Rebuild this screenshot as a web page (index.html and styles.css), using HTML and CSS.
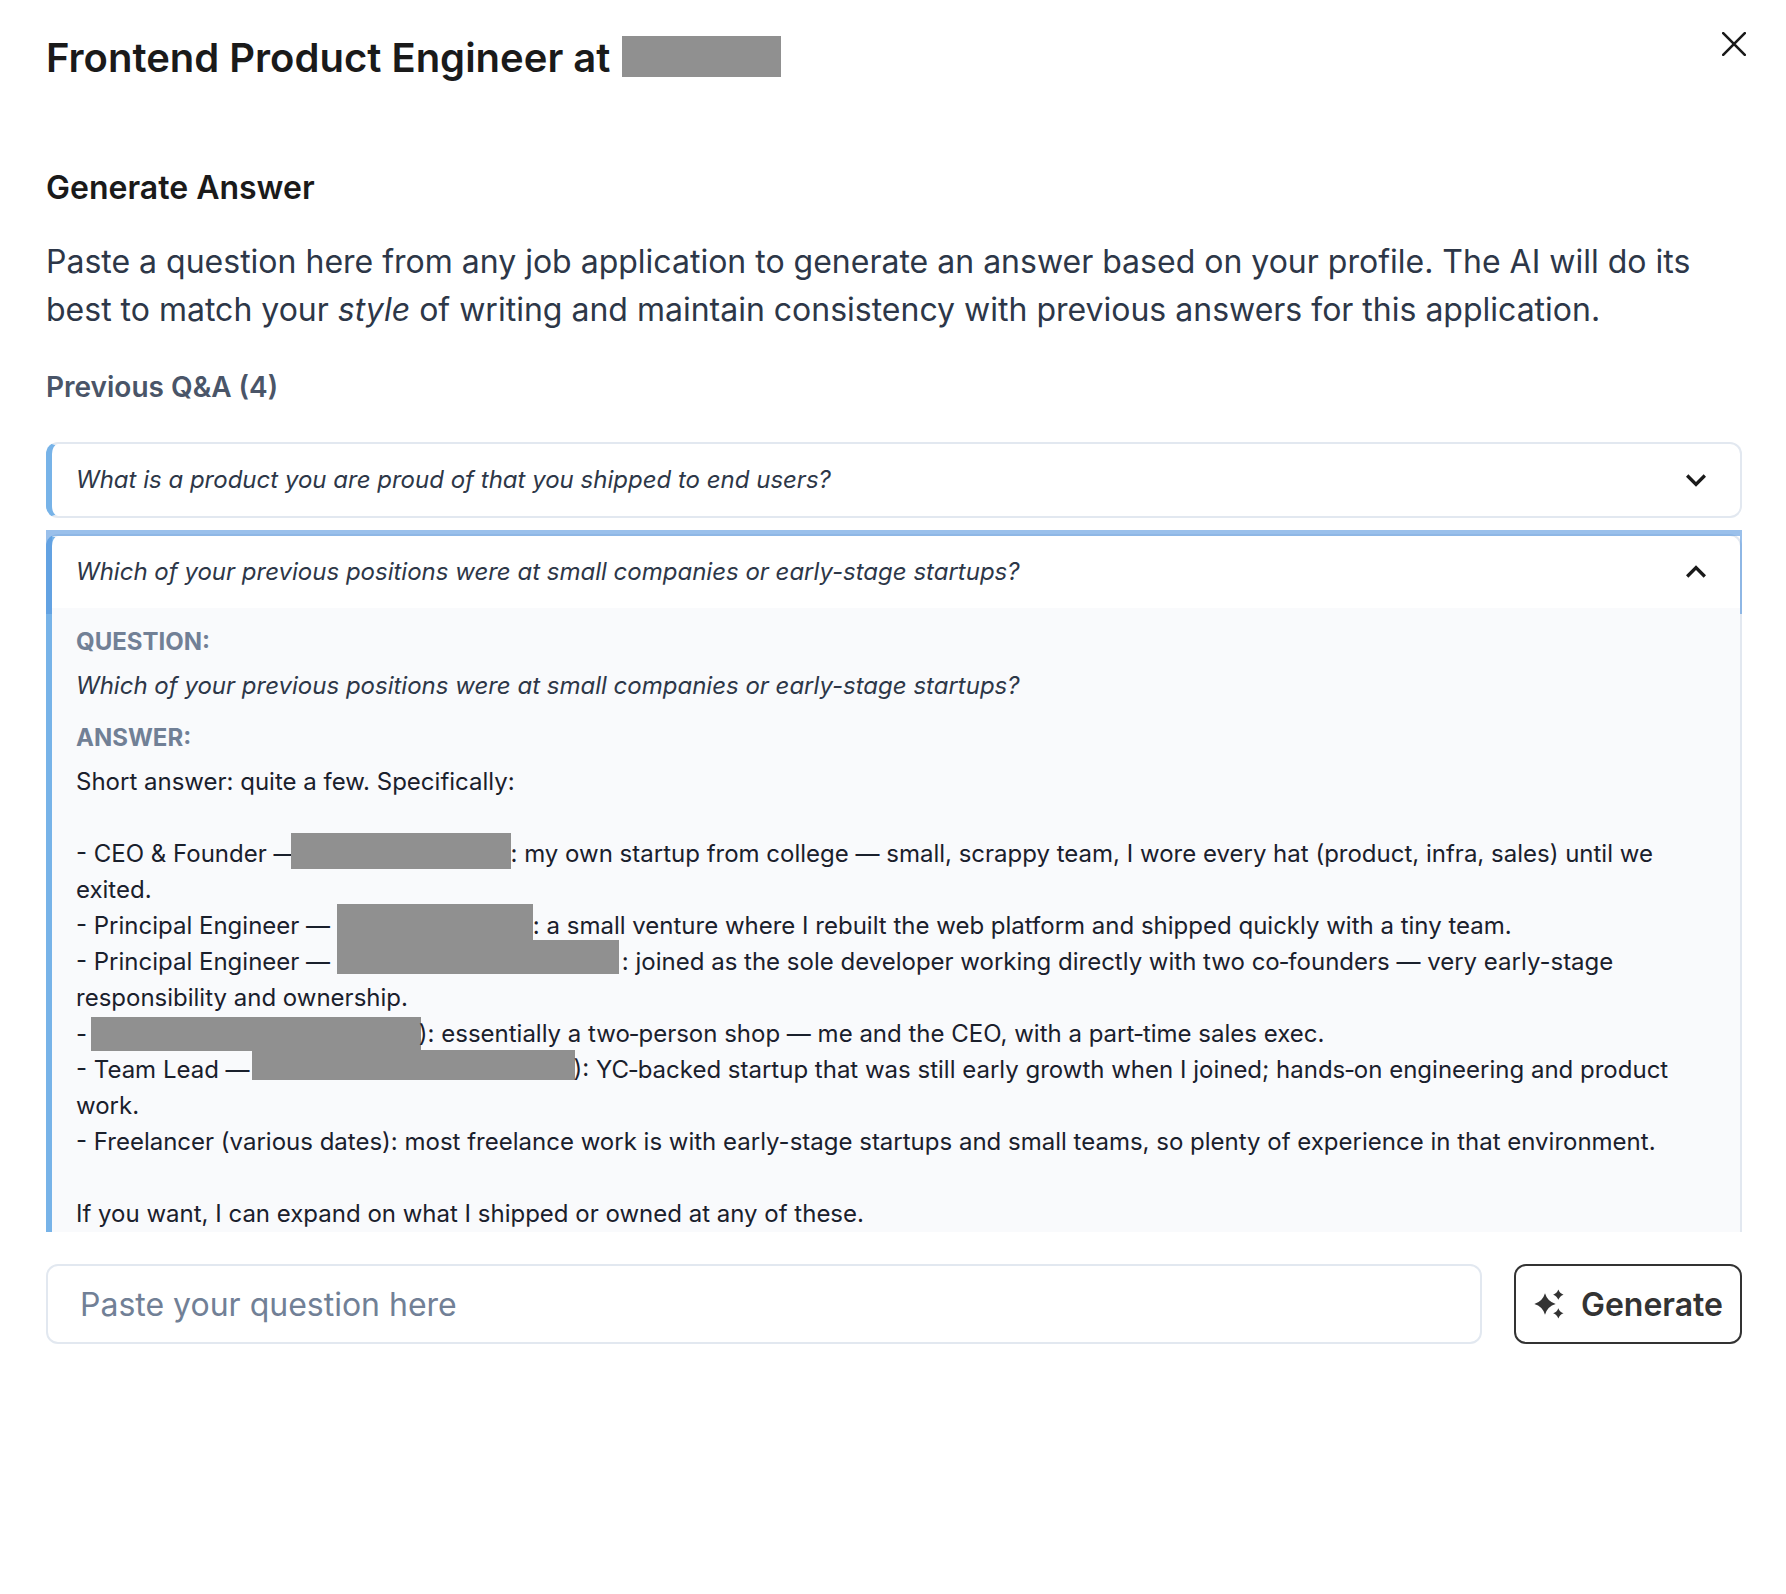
FILE: index.html
```html
<!DOCTYPE html>
<html lang="en">
<head>
    <meta charset="UTF-8">
    <meta name="viewport" content="width=device-width, initial-scale=1.0">
    <title>Generate Answer</title>
    <link rel="stylesheet" href="styles.css">
</head>
<body>
<main class="modal">
    <button class="close" type="button" aria-label="Close">
        <svg viewBox="0 0 24 24" width="24" height="24"><path d="M1.2 1.2 22.8 22.8M22.8 1.2 1.2 22.8"/></svg>
    </button>
    <h1>Frontend Product Engineer at <span class="redacted redacted-title"></span></h1>

    <h2>Generate Answer</h2>
    <p class="intro">Paste a question here from any job application to generate an answer based on your profile. The AI will do its best to match your <em>style</em> of writing and maintain consistency with previous answers for this application.</p>

    <h3>Previous Q&amp;A (4)</h3>
    <div class="qa-list">
        <section class="qa">
            <button class="qa-head" type="button" aria-expanded="false">
                <span>What is a product you are proud of that you shipped to end users?</span>
                <svg class="chevron" viewBox="0 0 24 24"><path d="M16.59 8.59 12 13.17 7.41 8.59 6 10l6 6 6-6z"/></svg>
            </button>
        </section>
        <section class="qa">
            <button class="qa-head focused" type="button" aria-expanded="true">
                <span>Which of your previous positions were at small companies or early-stage startups?</span>
                <svg class="chevron" viewBox="0 0 24 24"><path d="M16.59 8.59 12 13.17 7.41 8.59 6 10l6 6 6-6z"/></svg>
            </button>
            <div class="qa-body">
                <h4>QUESTION:</h4>
                <p class="question">Which of your previous positions were at small companies or early-stage startups?</p>
                <h4>ANSWER:</h4>
                <div class="answer">
                    <p>Short answer: quite a few. Specifically:</p>
                    <br>
                    <p>- CEO &amp; Founder —<span class="redacted company-a"></span>: my own startup from college — small, scrappy team, I wore every hat (product, infra, sales) until we exited.</p>
                    <p>- Principal Engineer — <span class="redacted company-b"></span>: a small venture where I rebuilt the web platform and shipped quickly with a tiny team.</p>
                    <p>- Principal Engineer — <span class="redacted company-c"></span>: joined as the sole developer working directly with two co&#8209;founders — very early-stage responsibility and ownership.</p>
                    <p>- <span class="redacted company-d"></span>): essentially a two&#8209;person shop — me and the CEO, with a part&#8209;time sales exec.</p>
                    <p>- Team Lead —<span class="redacted company-e"></span>): YC&#8209;backed startup that was still early growth when I joined; hands&#8209;on engineering and product work.</p>
                    <p>- Freelancer (various dates): most freelance work is with early-stage startups and small teams, so plenty of experience in that environment.</p>
                    <br>
                    <p>If you want, I can expand on what I shipped or owned at any of these.</p>
                </div>
            </div>
        </section>
    </div>

    <form class="ask">
        <input type="text" placeholder="Paste your question here" aria-label="Question">
        <button class="generate" type="button">
            <svg viewBox="0 0 24 24" width="32" height="32"><path d="M9 4Q10.8 10.2 17 12 10.8 13.8 9 20 7.2 13.8 1 12 7.2 10.2 9 4zM19 1.1Q20 4 22.9 5 20 6 19 8.9 18 6 15.1 5 18 4 19 1.1zM19 15.1Q20 18 22.9 19 20 20 19 22.9 18 20 15.1 19 18 18 19 15.1z"/></svg>
            Generate
        </button>
    </form>
</main>
</body>
</html>
```
FILE: styles.css
```css
*{box-sizing:border-box;}
body{margin:0;background:#fff;color:#1a1a1a;font-family:Inter,"Liberation Sans",sans-serif;}
h1,h2,h3,h4,p{margin:0;}
button,input{font:inherit;color:inherit;}
button{cursor:pointer;}

.modal{position:relative;padding:32px 44px 32px 46px;}
.close{position:absolute;top:16px;right:24px;width:56px;height:56px;padding:0;border:0;background:none;
display:flex;align-items:center;justify-content:center;}
.close path{fill:none;stroke:#1a1a1a;stroke-width:2.6;stroke-linecap:round;}

h1{font-size:40px;line-height:52px;font-weight:600;}
h2{margin-top:82px;font-size:32px;line-height:44px;font-weight:600;}
h3{margin-top:32px;font-size:28px;line-height:42px;font-weight:600;color:#4a5568;}
.intro{margin-top:28px;font-size:32px;line-height:48px;color:#2d3748;}

.qa-list{margin-top:34px;max-height:790px;overflow-y:auto;scrollbar-width:none;font-size:24px;line-height:36px;}
.qa{border:2px solid #e2e8f0;border-left:6px solid #77b3e8;border-radius:12px;margin-bottom:16px;}
.qa-head{display:flex;align-items:center;justify-content:space-between;width:100%;height:72px;padding:0 24px;
border:0;background:none;color:#2d3748;font-style:italic;text-align:left;}
.focused{box-shadow:0 0 0 6px rgba(87,150,222,.6);}
.chevron{width:40px;height:40px;fill:#1a1a1a;flex:none;}
[aria-expanded="true"] .chevron{transform:rotate(180deg);}
.qa-body{position:relative;padding:16px 24px;background:#f9fafc;}
h4{font-size:24px;font-weight:700;color:#718096;}
.question{margin:8px 0 16px;font-style:italic;color:#2d3748;}
.answer{margin-top:8px;color:#1a202c;}

.redacted{display:inline-block;vertical-align:top;height:36px;background:#909090;}
.redacted-title{width:159px;height:41px;margin:4px 0 0 1px;}
.company-a{width:220px;margin:-3px 0 0 -7px;}
.company-b{width:196px;margin-top:-4px;}
.company-c{width:282px;height:34px;margin:-4px 3px 0 0;}
.company-d{width:330px;height:34px;margin:1px -2px 0 -3px;}
.company-e{width:323px;height:30px;margin:-2px -1px 0 2px;}

.ask{display:flex;gap:32px;margin-top:32px;font-size:32px;}
.ask input{flex:1;min-width:0;height:80px;padding:0 32px;border:2px solid #e2e8f0;border-radius:12px;background:#fff;}
.ask input::placeholder{color:#718096;opacity:1;}
.generate{display:flex;align-items:center;gap:16px;height:80px;padding:0 17px;border:2px solid #333;border-radius:12px;
background:#fff;color:#333;font-weight:600;}
.generate svg{fill:#333;}
```
